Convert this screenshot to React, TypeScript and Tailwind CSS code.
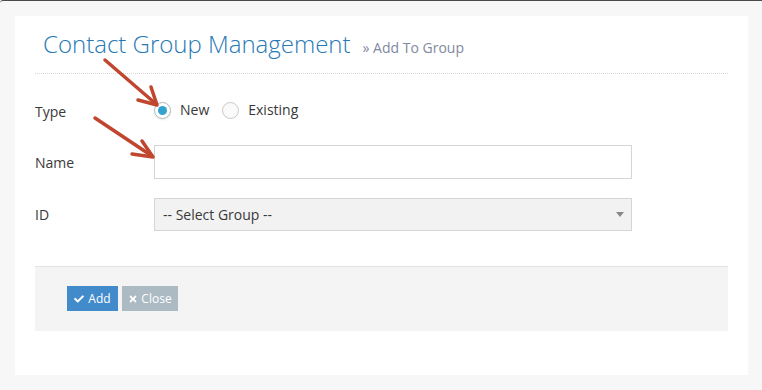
import React from 'react';
import { FaCheck, FaTimes } from 'react-icons/fa';

const Arrow: React.FC<{ d: string }> = ({ d }) => (
  <path d={d} fill="none" stroke="#c0462f" strokeWidth={3.5} strokeLinecap="round" strokeLinejoin="round" />
);

const App: React.FC = () => {
  return (
    <div
      className="relative w-[762px] h-[390px] bg-[#f7f7f7] border-t border-[#4a4a4a] rounded-tl-[3px] overflow-hidden"
      style={{ fontFamily: '"Open Sans", Arial, sans-serif' }}
    >
      <div className="ml-[15px] mt-[15px] w-[733px] h-[359px] bg-white px-[20px]">
        {/* Header */}
        <div className="pt-[12px] pb-[13px] border-b border-dotted border-[#d8d8d8]">
          <h1 className="ml-[8px] h-[32px] flex items-baseline leading-[32px]">
            <span className="text-[24px] font-light text-[#2679b5]">Contact Group Management</span>
            <span className="ml-[12px] text-[14px] text-[#8089a0]">» Add To Group</span>
          </h1>
        </div>

        {/* Form */}
        <div className="text-[14px] text-[#393939]">
          <div className="mt-[26px] h-[20px] flex items-center">
            <div className="w-[119px] pt-[3px]">Type</div>
            <label className="flex items-center">
              <span className="w-[17px] h-[17px] rounded-full border border-[#adb8c0] bg-white flex items-center justify-center shadow-[0_1px_2px_rgba(0,0,0,0.08)]">
                <span className="w-[9px] h-[9px] rounded-full bg-[#32a3ce]" />
              </span>
              <span className="ml-[9px] pb-[2px]">New</span>
            </label>
            <label className="flex items-center ml-[13px]">
              <span className="w-[17px] h-[17px] rounded-full border border-[#c8c8c8] bg-[#fafafa]" />
              <span className="ml-[9px] pb-[2px]">Existing</span>
            </label>
          </div>

          <div className="mt-[25px] h-[34px] flex items-center">
            <div className="w-[119px] pt-[1px]">Name</div>
            <input
              className="w-[478px] h-[34px] border border-[#d5d5d5] bg-white px-[8px] outline-none"
              type="text"
            />
          </div>

          <div className="mt-[19px] h-[33px] flex items-center">
            <div className="w-[119px]">ID</div>
            <div className="w-[478px] h-[33px] border border-[#d5d5d5] bg-[#f2f2f2] pl-[8px] pr-[7px] flex items-center justify-between text-[#393939]">
              <span>-- Select Group --</span>
              <span className="w-0 h-0 border-l-[4px] border-r-[4px] border-t-[5px] border-l-transparent border-r-transparent border-t-[#888]" />
            </div>
          </div>
        </div>

        {/* Actions */}
        <div className="mt-[35px] border-t border-[#e3e3e3] bg-[#f4f4f4] pt-[19px] pb-[20px] pl-[32px] flex gap-[4px]">
          <button className="w-[51px] h-[25px] bg-[#428bca] text-white text-[12px] flex items-center justify-center gap-[4px]">
            <FaCheck size={10} />
            <span>Add</span>
          </button>
          <button className="w-[56px] h-[25px] bg-[#abbac3] text-white text-[12px] flex items-center justify-center gap-[3px]">
            <FaTimes size={10} />
            <span>Close</span>
          </button>
        </div>
      </div>

      {/* annotation arrows */}
      <svg className="absolute left-0 top-0 pointer-events-none" width="762" height="390">
        <Arrow d="M105 59 L156 103" />
        <Arrow d="M138 99 L157 104 L151 86" />
        <Arrow d="M95 117 L152 155" />
        <Arrow d="M132 153 L153 156 L142 140" />
      </svg>
    </div>
  );
};

export default App;
